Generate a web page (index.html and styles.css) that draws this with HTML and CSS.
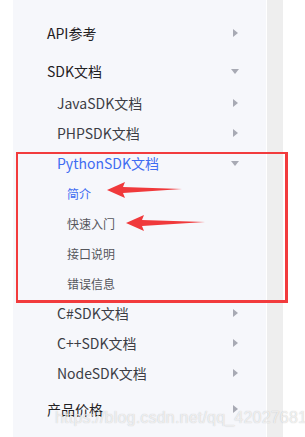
FILE: index.html
```html
<!DOCTYPE html>
<html lang="zh-CN">
<head>
  <meta charset="UTF-8" />
  <meta name="viewport" content="width=device-width, initial-scale=1.0" />
  <title>文档菜单</title>
  <link rel="stylesheet" href="styles.css">
</head>
<body>

  <div class="page">
    <div class="sidebar">
      <ul class="menu">
        <li class="menu-item first">
          <div class="title top">Q&amp;A</div>
        </li>
        <li class="menu-item">
          <div class="title top">API参考 <span class="caret right"></span></div>
        </li>
        <li class="menu-item">
          <div class="title top">SDK文档 <span class="caret down"></span></div>
          <ul class="submenu">
            <li><div class="title sub">JavaSDK文档 <span class="caret right"></span></div></li>
            <li><div class="title sub">PHPSDK文档 <span class="caret right"></span></div></li>
            <li>
              <div class="title sub active">PythonSDK文档 <span class="caret down"></span></div>
              <ul class="submenu">
                <li><div class="title leaf active">简介</div></li>
                <li><div class="title leaf">快速入门</div></li>
                <li><div class="title leaf">接口说明</div></li>
                <li><div class="title leaf">错误信息</div></li>
              </ul>
            </li>
            <li><div class="title sub">C#SDK文档 <span class="caret right"></span></div></li>
            <li><div class="title sub">C++SDK文档 <span class="caret right"></span></div></li>
            <li><div class="title sub">NodeSDK文档 <span class="caret right"></span></div></li>
          </ul>
        </li>
        <li class="menu-item">
          <div class="title top">产品价格 <span class="caret right"></span></div>
        </li>
      </ul>
    </div>
    <div class="gutter"></div>
  </div>

  <!-- annotations drawn over the screenshot -->
  <div class="highlight-box"></div>
  <svg class="pointer pointer-one" width="76" height="18" viewBox="0 0 76 18">
    <polygon points="0,9 18,1 16,6 75,8 16,12 18,17" fill="#f0393b"/>
  </svg>
  <svg class="pointer pointer-two" width="80" height="18" viewBox="0 0 80 18">
    <polygon points="0,9 18,1 16,6 79,8 16,12 18,17" fill="#f0393b"/>
  </svg>
  <div class="watermark">https://blog.csdn.net/qq_42027681</div>

</body>
</html>
```

FILE: styles.css
```css
body {
  margin: 0;
  background-color: #ffffff;
  font-family: "Noto Sans CJK SC", "Noto Sans", sans-serif;
  overflow: hidden;
}

.page {
  display: flex;
  height: 437px;
  padding-left: 13px;
}

.sidebar {
  width: 253px;
  background-color: #f6f7fb;
  border-right: 1px solid #ffffff;
  overflow: hidden;
}

.gutter {
  width: 16px;
  background-color: #eeeeee;
}

.menu,
.submenu {
  list-style: none;
  margin: 0;
  padding: 0;
}

.menu-item {
  margin-top: 4px;
}

.menu-item.first {
  margin-top: -22px;
}

.menu-item.first .title {
  height: 26px;
  padding-bottom: 8px;
}

.title {
  display: flex;
  align-items: center;
  justify-content: space-between;
  padding-right: 27px;
  white-space: nowrap;
}

.title.top {
  height: 34px;
  padding-left: 34px;
  font-size: 14px;
  color: #1f2023;
}

.title.sub {
  height: 30px;
  padding-left: 44px;
  font-size: 14px;
  color: #3c3d45;
}

.title.leaf {
  height: 30px;
  padding-left: 54px;
  font-size: 12px;
  color: #55565c;
}

.title.active {
  color: #3f6cf2;
}

.caret {
  width: 0;
  height: 0;
  border-style: solid;
}

.caret.right {
  border-width: 4px 0 4px 5px;
  border-color: transparent transparent transparent #a8aab4;
  margin-right: 1px;
}

.caret.down {
  border-width: 5px 4px 0 4px;
  border-color: #a8aab4 transparent transparent transparent;
}

.highlight-box {
  position: absolute;
  left: 16px;
  top: 152px;
  width: 267px;
  height: 146px;
  border: 2px solid #f23b3d;
  border-right-width: 3px;
  border-bottom-width: 3px;
}

.pointer {
  position: absolute;
}

.pointer-one {
  left: 107px;
  top: 181px;
}

.pointer-two {
  left: 126px;
  top: 214px;
}

.watermark {
  position: absolute;
  left: 55px;
  top: 409px;
  font-family: "Liberation Sans", Arial, sans-serif;
  font-size: 16px;
  color: rgba(255, 255, 255, 0.7);
  text-shadow: 0 0 1px rgba(120, 120, 120, 0.45);
  letter-spacing: 0.2px;
}
```
